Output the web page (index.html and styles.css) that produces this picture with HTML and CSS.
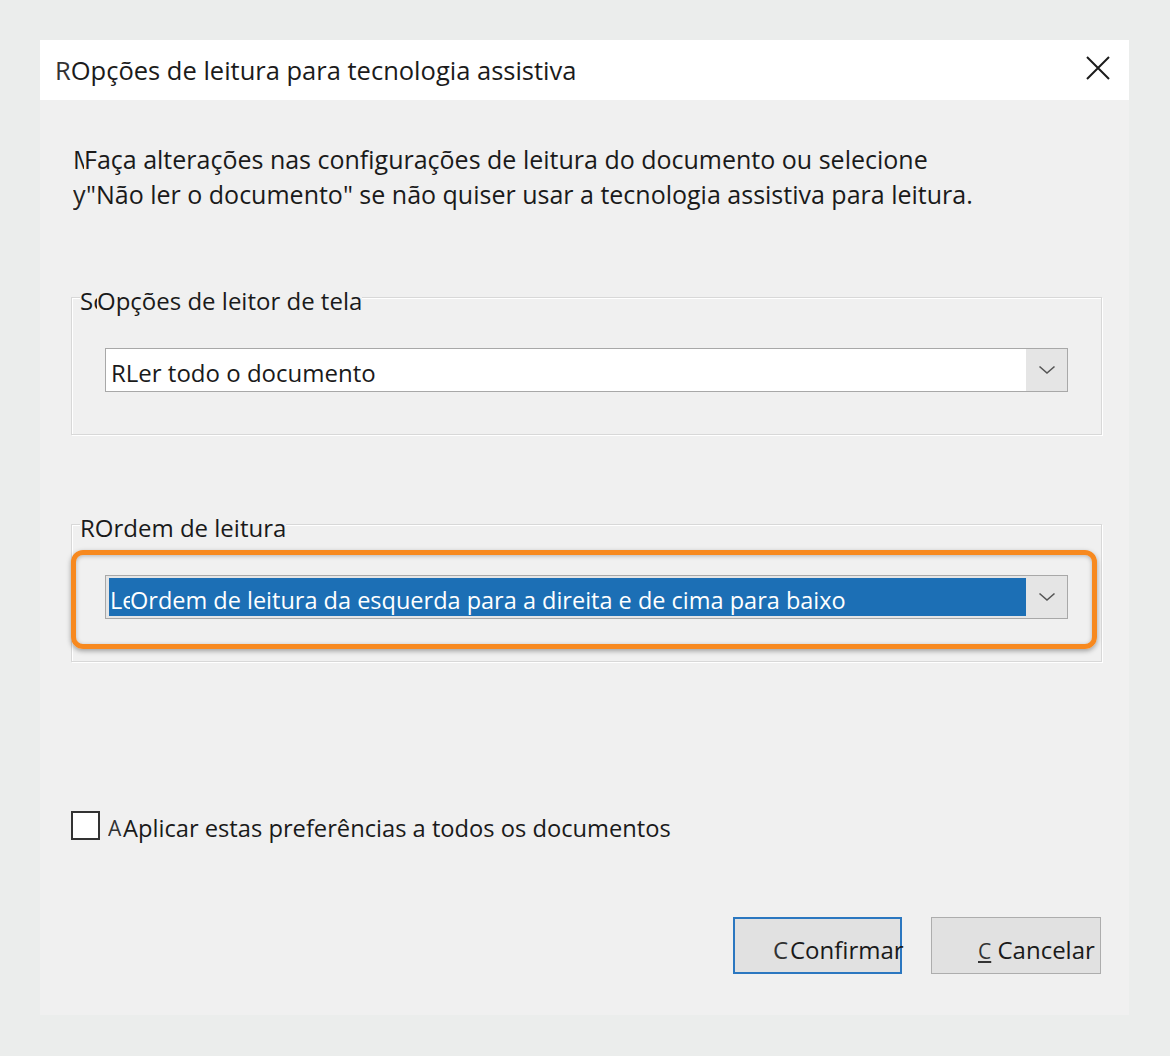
FILE: index.html
```html
<!DOCTYPE html>
<html lang="pt-br">
<head>
    <meta charset="UTF-8">
    <title>Opções de leitura para tecnologia assistiva</title>
    <link rel="stylesheet" href="styles.css">
</head>
<body>
    <div class="dialog">
        <div class="titlebar">
            <div class="title"><span class="ghost ghost-title">R</span>Opções de leitura para tecnologia assistiva</div>
            <svg class="close" width="26" height="26" viewBox="0 0 26 26">
                <path d="M2 2 L24 24 M24 2 L2 24" stroke="#1b1b1b" stroke-width="2" fill="none"/>
            </svg>
        </div>

        <div class="content">
            <p class="intro">
                <span class="line"><span class="ghost clip-m">M</span>Faça alterações nas configurações de leitura do documento ou selecione</span>
                <span class="line"><span class="ghost clip-y">y</span>"Não ler o documento" se não quiser usar a tecnologia assistiva para leitura.</span>
            </p>

            <fieldset class="group group-reader">
                <legend><span class="ghost clip-sc">Sc</span>Opções de leitor de tela</legend>
                <div class="select">
                    <div class="select-value"><span class="ghost ghost-r">R</span>Ler todo o documento</div>
                    <div class="select-arrow">
                        <svg width="18" height="10" viewBox="0 0 18 10"><path d="M1.5 1.5 L9 8 L16.5 1.5" stroke="#555" stroke-width="1.6" fill="none"/></svg>
                    </div>
                </div>
            </fieldset>

            <fieldset class="group group-order">
                <legend><span class="ghost ghost-r">R</span>Ordem de leitura</legend>
                <div class="select">
                    <div class="select-value selected"><span class="ghost clip-le">Le</span>Ordem de leitura da esquerda para a direita e de cima para baixo</div>
                    <div class="select-arrow">
                        <svg width="18" height="10" viewBox="0 0 18 10"><path d="M1.5 1.5 L9 8 L16.5 1.5" stroke="#555" stroke-width="1.6" fill="none"/></svg>
                    </div>
                </div>
                <div class="highlight"></div>
            </fieldset>

            <label class="check">
                <span class="box"></span>
                <span class="check-label"><span class="ghost clip-a">A</span>Aplicar estas preferências a todos os documentos</span>
            </label>

            <div class="actions">
                <button class="btn btn-default"><span class="ghost clip-c">C</span>Confirmar</button>
                <button class="btn"><span class="accel">C</span> Cancelar</button>
            </div>
        </div>
    </div>
</body>
</html>
```

FILE: styles.css
```css
body {
    margin: 0;
    padding: 40px 41px 41px 40px;
    background: #ebedec;
    font-family: 'Open Sans', 'Noto Sans', sans-serif;
    color: #1a1a1a;
}

.dialog {
    width: 1089px;
    height: 975px;
    background: #f0f0f0;
    display: flex;
    flex-direction: column;
}

.titlebar {
    height: 60px;
    flex: none;
    background: #fff;
    display: flex;
    align-items: center;
    justify-content: space-between;
    padding: 0 18px 0 15px;
}

.title {
    font-size: 25.5px;
    color: #1b1b1b;
}

.close {
    display: block;
    margin-top: -4px;
}

.ghost {
    display: inline-block;
    vertical-align: top;
    overflow: hidden;
    white-space: nowrap;
}

.ghost-title { color: #333; }
.clip-m { width: 11px; }
.clip-y { width: 13px; color: #222; }
.clip-sc { width: 17px; }
.clip-le { width: 20px; }
.clip-a { width: 15px; font-size: 21px; color: #333; margin-top: 2px; }
.clip-c { width: 17px; color: #333; }

.content {
    flex: 1;
    padding: 0 27px 0 31px;
    display: flex;
    flex-direction: column;
}

.intro {
    margin: 42px 0 0 2px;
    font-size: 25px;
    line-height: 35px;
}

.intro .line {
    display: block;
}

.group {
    position: relative;
    margin: 0;
    padding: 0 33px 42px 33px;
    border: 1px solid #d8d8d8;
    box-shadow: 1px 1px 0 #fff, inset 1px 1px 0 #fff;
    min-width: 0;
}

.group legend {
    padding: 8px 0 0 0;
    margin-left: -25px;
    font-size: 24px;
    line-height: 22px;
    background: #f0f0f0;
}

.group-reader {
    margin-top: 70px;
}

.group-order {
    margin-top: 74px;
}

.group-reader .select {
    margin-top: 36px;
}

.group-order .select {
    margin-top: 36px;
}

.select {
    height: 44px;
    box-sizing: border-box;
    border: 1px solid #a8a8a8;
    background: #e5e5e5;
    display: flex;
    align-items: stretch;
}

.select-value {
    flex: 1;
    background: #fff;
    font-size: 24px;
    line-height: 34px;
    padding: 6px 0 0 4px;
    white-space: nowrap;
    overflow: hidden;
    border: 1px solid #fff;
}

.select-value.selected {
    background: #1c6fb5;
    color: #fff;
    margin: 2px 0 2px 3px;
    border: none;
    font-size: 23.5px;
    line-height: 31px;
    padding: 7px 0 0 1px;
}

.select-arrow {
    width: 41px;
    flex: none;
    display: flex;
    align-items: center;
    justify-content: center;
}

.highlight {
    position: absolute;
    left: -1px;
    top: 11px;
    width: 1026px;
    height: 99px;
    box-sizing: border-box;
    border: 5px solid #f7891f;
    border-radius: 12px;
    box-shadow: 0 2px 5px rgba(0, 0, 0, 0.35), inset 0 1px 4px rgba(0, 0, 0, 0.25);
}

.check {
    margin-top: 144px;
    display: flex;
    align-items: center;
    gap: 8px;
}

.box {
    width: 29px;
    height: 29px;
    box-sizing: border-box;
    border: 2px solid #333;
    background: #fff;
    flex: none;
}

.check-label {
    font-size: 23.7px;
    margin-top: 6px;
}

.actions {
    margin-top: 73px;
    display: flex;
    justify-content: flex-end;
    gap: 29px;
    padding-right: 1px;
}

.btn {
    width: 170px;
    height: 57px;
    background: #e1e1e1;
    border: 1px solid #adadad;
    font-family: inherit;
    font-size: 24px;
    color: #1a1a1a;
    padding: 7px 0 0 46px;
    text-align: left;
    white-space: nowrap;
}

.btn-default {
    border: 2px solid #2b77c0;
    padding-left: 38px;
    width: 169px;
}

.accel {
    text-decoration: underline;
    font-size: 21px;
    color: #333;
}
```
